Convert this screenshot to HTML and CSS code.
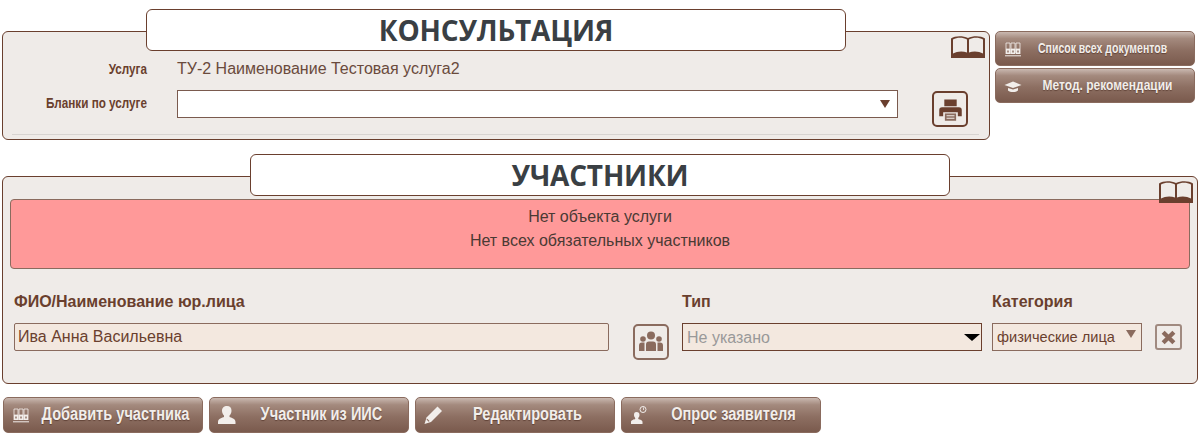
FILE: index.html
```html
<!DOCTYPE html>
<html>

<head>
  <title>Консультация</title>
  <meta charset="utf-8">
  <link rel="stylesheet" href="styles.css">
</head>

<body>
  <div class="top">
    <div class="top-main">
      <h2 class="title">КОНСУЛЬТАЦИЯ</h2>
      <div class="panel panel-consult">
        <svg class="book" viewBox="0 0 34 23"><use href="#i-book"></use></svg>
        <div class="row row-service">
          <div class="row-label">Услуга</div>
          <div class="row-value">ТУ-2 Наименование Тестовая услуга2</div>
        </div>
        <div class="row row-blank">
          <div class="row-label">Бланки по услуге</div>
          <div class="select select-blank">
            <select></select>
          </div>
          <button class="icon-btn btn-print">
            <svg viewBox="0 0 24 24" width="27" height="27">
              <path fill="#6a3f2e" d="M6.500 3h11v6h-11zM4.500 10h15a2.500 2.500 0 0 1 2.500 2.500V18h-3.500v-3.500h-13V18H2v-5.500A2.500 2.500 0 0 1 4.500 10z"/>
              <path fill="#8a6b5e" d="M7 15.500h10V22H7z"/>
              <path fill="#efebe8" d="M8.500 17h7v1h-7zM8.500 19.300h7v1h-7z"/>
            </svg>
          </button>
        </div>
        <div class="panel-line"></div>
      </div>
    </div>
    <div class="side">
      <a class="btn btn-side btn-wide">
        <svg class="btn-icon" viewBox="0 0 18 18" width="18" height="18"><use href="#i-docs"></use></svg>
        <span>Список всех документов</span>
      </a>
      <a class="btn btn-side">
        <svg class="btn-icon" viewBox="0 0 18 18" width="18" height="18">
          <path fill="#f2eeeb" d="M9 4.500 17.500 8 9 11 .5 8z"/>
          <path fill="#f2eeeb" d="M4 11 9 12.500 14 11v2.500c-1.300 1-2.900 1.500-5 1.500s-3.700-.5-5-1.500z"/>
        </svg>
        <span>Метод. рекомендации</span>
      </a>
    </div>
  </div>

  <h2 class="title title-members">УЧАСТНИКИ</h2>
  <div class="panel panel-members">
    <svg class="book" viewBox="0 0 34 23"><use href="#i-book"></use></svg>
    <div class="alert">
      <div>Нет объекта услуги</div>
      <div>Нет всех обязательных участников</div>
    </div>
    <div class="member-grid">
      <label class="member-label">ФИО/Наименование юр.лица</label>
      <span></span>
      <label class="member-label">Тип</label>
      <label class="member-label">Категория</label>
      <span></span>

      <input class="field" type="text" value="Ива Анна Васильевна">
      <button class="icon-btn btn-group">
        <svg viewBox="0 0 26 22" width="26" height="22" fill="#8a6b5e">
          <circle cx="13" cy="4.500" r="4"/>
          <circle cx="5" cy="8" r="2.800"/>
          <circle cx="21" cy="8" r="2.800"/>
          <path d="M8 20v-6.500a3 3 0 0 1 3-3h4a3 3 0 0 1 3 3V20z"/>
          <path d="M1 20v-5.500a3 3 0 0 1 3-3h2.500v8.500zM25 20v-5.500a3 3 0 0 0-3-3h-2.500v8.500z"/>
        </svg>
      </button>
      <div class="select select-type">
        <select>
          <option>Не указано</option>
        </select>
      </div>
      <div class="select select-cat">
        <select>
          <option>физические лица</option>
        </select>
      </div>
      <button class="icon-btn btn-remove">
        <svg viewBox="0 0 14 14" width="15" height="15">
          <path fill="none" stroke="#8a6b5e" stroke-width="4" d="M2 2l10 10M12 2 2 12"/>
        </svg>
      </button>
    </div>
  </div>

  <div class="actions">
    <a class="btn">
      <svg class="btn-icon" viewBox="0 0 18 18" width="18" height="18"><use href="#i-docs"></use></svg>
      <span>Добавить участника</span>
    </a>
    <a class="btn">
      <svg class="btn-icon" viewBox="0 0 18 18" width="18" height="18">
        <path fill="#f2eeeb" d="M9 0c3 0 4.500 2 4.500 4.700 0 2-1 3.800-2 4.800v1.500c1.500.7 6 1.500 6 5V18H0v-2c0-3.500 4.500-4.300 6-5V9.500c-1-1-2-2.800-2-4.800C4 2 6 0 9 0z"/>
      </svg>
      <span>Участник из ИИС</span>
    </a>
    <a class="btn">
      <svg class="btn-icon" viewBox="0 0 18 18" width="18" height="18">
        <path fill="#f2eeeb" d="M13.500 .5 18 5 7 16 .5 18 2.500 11.500z"/>
        <path fill="#8a6b5e" d="M3.200 12.800 5.500 15l-.8.8-2.200-2.200z"/>
      </svg>
      <span>Редактировать</span>
    </a>
    <a class="btn">
      <svg class="btn-icon" viewBox="0 0 18 18" width="18" height="18">
        <circle cx="13" cy="3.500" r="3" fill="none" stroke="#f2eeeb" stroke-width="1"/>
        <path fill="#f2eeeb" d="M13 1.500h.8v2.500H13zM6.500 6c2 0 3 1.300 3 3 0 1.200-.6 2.200-1.200 2.900v1c1 .5 4.200.9 4.200 3V18H1v-2.100c0-2.100 3.200-2.500 4.200-3v-1C4.600 11.200 4 10.200 4 9c0-1.700.5-3 2.500-3z"/>
      </svg>
      <span>Опрос заявителя</span>
    </a>
  </div>

  <svg class="defs" width="0" height="0">
    <defs>
      <g id="i-book">
        <path fill="#6a3f2e" d="M0 19.500V3.500C4 .5 12 .5 17 3c5-2.500 13-2.500 17 .5V23H0z"/>
        <path fill="#efebe8" d="M2 18.500V4.500c4-2.200 10-2.200 14 0v13c-4-1.700-10-1.500-14 1zM18 4.500c4-2.200 10-2.200 14 0v14c-4-2.500-10-2.700-14-1z"/>
      </g>
      <g id="i-docs">
        <path d="M2 3h4v6H2zM7 3h4v6H7zM12 3h4v6h-4z" fill="none" stroke="#f2eeeb" stroke-width=".8"/>
        <path d="M1.600 9h4.800v5H1.600zM6.600 9h4.800v5H6.600zM11.600 9h4.800v5h-4.800z" fill="#f2eeeb"/>
        <path d="M3.300 10.500h1.400v2H3.300zM8.300 10.500h1.400v2H8.300zM13.300 10.500h1.400v2h-1.400z" fill="#8a6b5e"/>
        <path d="M1 15.300h16v1H1z" fill="#f2eeeb"/>
      </g>
    </defs>
  </svg>
</body>

</html>
```

FILE: styles.css
```css
* {
  box-sizing: border-box;
}

body {
  margin: 0;
  padding: 9px 3px 0 2px;
  font-family: "Liberation Sans", Arial, sans-serif;
  font-size: 16px;
  color: #6a3f2e;
  background: #fff;
}

.top {
  display: flex;
  gap: 5px;
}

.top-main {
  width: 988px;
  flex: none;
}

.title {
  position: relative;
  z-index: 1;
  width: 700px;
  height: 42px;
  margin: 0 auto -20px;
  border: 1px solid #6a3f2e;
  border-radius: 6px;
  background: #fff;
  color: #3a3f44;
  font-family: "Open Sans", sans-serif;
  font-size: 28px;
  font-weight: 700;
  letter-spacing: -.2px;
  line-height: 40px;
  text-align: center;
}

.title-members {
  margin-top: 14px;
}

.panel {
  position: relative;
  border: 1px solid #6a3f2e;
  border-radius: 6px;
  background: #efebe8;
}

.panel-consult {
  height: 109px;
  padding: 22px 10px 0 0;
}

.panel-members {
  width: 1196px;
  height: 208px;
  padding: 22px 7px 0 7px;
}

.panel-line {
  height: 1px;
  margin: 7px 0 0 9px;
  background: #d8d4d1;
}

.book {
  position: absolute;
  top: 3px;
  right: 4px;
  width: 34px;
  height: 23px;
}

.row {
  display: flex;
  align-items: center;
}

.row-service {
  height: 30px;
}

.row-blank {
  align-items: flex-start;
  height: 37px;
  margin-top: 6px;
}

.row-label {
  width: 144px;
  flex: none;
  font-size: 15px;
  font-weight: 700;
  line-height: 26px;
  text-align: right;
  white-space: nowrap;
  transform: scaleX(.78);
  transform-origin: right center;
}

.row-value {
  margin-left: 30px;
  color: #6a4a3c;
}

.select {
  position: relative;
  align-self: start;
}

.select::after {
  content: "";
  position: absolute;
  top: 50%;
  right: 8px;
  margin-top: -4px;
  border-style: solid;
  border-width: 8px 5px 0;
  border-color: #6a3f2e transparent transparent;
  pointer-events: none;
}

.select select {
  display: block;
  width: 100%;
  height: 28px;
  padding: 0 4px;
  appearance: none;
  border: 1px solid #7a5a4e;
  border-radius: 0;
  font-family: "Liberation Sans", sans-serif;
  font-size: 16px;
  color: #999;
  background: #f3e8df;
}

.select-blank {
  width: 721px;
  margin-left: 30px;
}

.select-blank select {
  background: #fff;
}

.select-type::after {
  right: 2px;
  margin-top: -3px;
  border-width: 7px 8px 0;
  border-top-color: #000;
}

.select-type select {
  border-color: #6a3f2e;
}

.select-cat::after {
  right: 6px;
  margin-top: -7px;
  border-top-color: #8a6b5e;
}

.select-cat select {
  font-size: 14.6px;
  color: #6a3f2e;
  border-color: #8a6b5e;
}

.icon-btn {
  display: flex;
  align-items: center;
  justify-content: center;
  padding: 0;
  border-radius: 5px;
  background: #efebe8;
}

.btn-print {
  width: 36px;
  height: 36px;
  margin: 1px 0 0 34px;
  border: 2px solid #6a3f2e;
}

.side {
  display: flex;
  flex-direction: column;
  gap: 2px;
  width: 200px;
  padding-top: 22px;
}

.btn {
  display: flex;
  align-items: center;
  width: 200px;
  height: 36px;
  padding: 0 1px 0 8px;
  border: 1px solid #8a6b5e;
  border-radius: 5px;
  background: linear-gradient(#c9b8b0 0, #a48a7e 20%, #8d6f62 55%, #7a5a4d 100%);
  font-size: 18px;
  font-weight: 700;
  color: #f2eeeb;
  text-shadow: 0 1px 1px rgba(60, 30, 20, .5);
}

.btn span {
  display: flex;
  flex: 1;
  justify-content: center;
  min-width: 0;
  padding-bottom: 2px;
  white-space: nowrap;
  transform: scaleX(.81);
}

.btn-icon {
  flex: none;
}

.btn-side {
  height: 35px;
  font-size: 15px;
}

.btn-side span {
  transform: scaleX(.8);
}

.btn-wide span {
  padding-right: 14px;
  transform: scaleX(.7);
}

.alert {
  height: 70px;
  padding-top: 5px;
  border: 1px solid #8a6b5e;
  border-radius: 4px;
  background: #ff9999;
  color: #4a3a34;
  line-height: 24px;
  text-align: center;
}

.member-grid {
  display: grid;
  grid-template-columns: 595px 73px 310px 163px 40px;
  grid-template-rows: 54px 37px;
  margin-left: 4px;
}

.member-label {
  align-self: end;
  padding-bottom: 12px;
  font-weight: 700;
}

.field {
  height: 28px;
  padding: 0 3px;
  border: 1px solid #8a6b5e;
  border-radius: 2px;
  background: #f3e8df;
  font-family: "Liberation Sans", sans-serif;
  font-size: 16px;
  color: #6a3f2e;
}

.btn-group {
  width: 36px;
  height: 36px;
  margin: 1px 0 0 24px;
  border: 2px solid #8a6b5e;
}

.select-type {
  width: 300px;
}

.select-cat {
  width: 150px;
}

.btn-remove {
  width: 27px;
  height: 26px;
  margin: 1px 0 0 0;
  border: 2px solid #a08a80;
  border-radius: 3px;
}

.actions {
  display: flex;
  gap: 6px;
  margin: 13px 0 0 1px;
}

.defs {
  position: absolute;
}
```
